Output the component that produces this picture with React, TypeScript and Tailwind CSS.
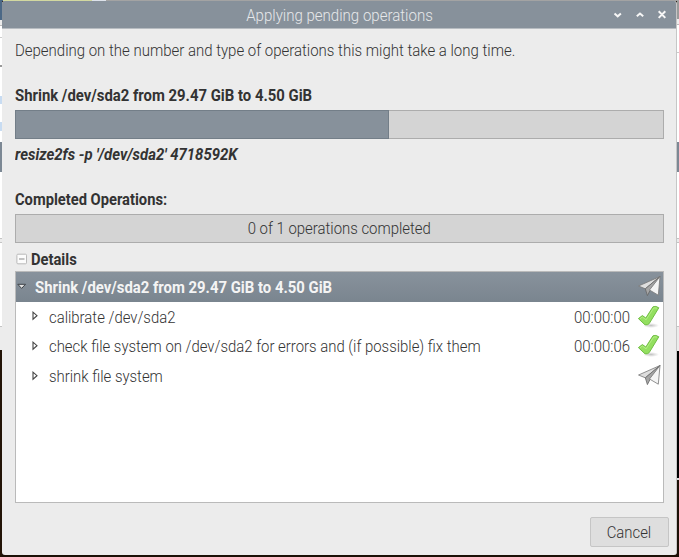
import React from "react";

function Plane() {
  return (
    <svg width="24" height="24" viewBox="0 0 24 24" className="mr-[-1px] shrink-0" strokeLinejoin="round">
      <path d="M1.5 11 23 1.5 8.3 13.8Z" fill="#dedede" stroke="#777" strokeWidth=".8" />
      <path d="M8.3 13.8 23 1.5 13 15.5 10.4 20.6Z" fill="#a5a5a5" stroke="#666" strokeWidth=".8" />
      <path d="M12.5 15 23 1.5 21.3 20.2Z" fill="#f4f4f4" stroke="#777" strokeWidth=".8" />
    </svg>
  );
}

function Tick() {
  return (
    <svg width="24" height="24" viewBox="0 0 24 24" className="mr-[-1px] shrink-0" strokeLinejoin="round">
      <defs>
        <radialGradient id="shade">
          <stop offset="0" stopColor="#999" stopOpacity=".6" />
          <stop offset="1" stopColor="#aaa" stopOpacity="0" />
        </radialGradient>
      </defs>
      <ellipse cx="14" cy="20.5" rx="8" ry="2.5" fill="url(#shade)" />
      <path d="M1.4 13.6 5.4 10.6 8.8 13 16 1.8Q18.8.6 21.8 2.8L12.2 18.6Q10.5 20.4 8 19.8Z" fill="#93df60" stroke="#6fbd42" strokeWidth="1" />
      <path d="M3 13.8 5.3 12 9.1 14.8 16.8 2.9 20 3.1" fill="none" stroke="#b5ed85" strokeWidth="1" />
    </svg>
  );
}

function Row({ label, time }: { label: string; time?: string }) {
  return (
    <div className="flex h-[29.67px] items-center pl-[16px] pr-[3px]">
      <svg width="7" height="10" viewBox="0 0 7 10" className="mt-[-1px]">
        <path d="M1 1.2v7L5 4.7Z" fill="#fff" stroke="#444" strokeWidth="1.1" />
      </svg>
      <span className="ml-[10px] mt-[2px] flex-1 whitespace-nowrap">
        <span className="inline-block origin-left scale-x-[.931]">{label}</span>
      </span>
      {time && <span className="mr-[7px] mt-[2px] origin-right scale-x-[.934]">{time}</span>}
      {time ? <Tick /> : <Plane />}
    </div>
  );
}

function LeftEdge() {
  return (
    <div className="flex w-[2px] shrink-0 flex-col bg-white">
      <div className="h-[19px] bg-[#4b6886]" />
      <div className="h-[5px] bg-[#ececec]" />
      <div className="h-px bg-[#bbb]" />
      <div className="h-[11px]" />
      <div className="h-px bg-[#ccc]" />
      <div className="h-[27px]" />
      <div className="h-[2px] bg-[#999]" />
      <div className="h-[29px]" />
      <div className="h-[8px] bg-[#c8dcf2]" />
      <div className="h-[18px]" />
      <div className="h-[9px] bg-[#c8dcf2]" />
      <div className="h-[11px]" />
      <div className="h-[30px] bg-[#7c8894]" />
      <div className="h-[66px]" />
      <div className="h-[5px] border-y border-[#c4c4c4] bg-[#ececec]" />
      <div className="h-[83px]" />
      <div className="h-[24px] border-t border-[#c4c4c4] bg-[#ececec]" />
      <div className="flex-1 bg-[#231407]" />
    </div>
  );
}

function RightEdge() {
  return (
    <div className="flex w-[2px] shrink-0 flex-col bg-white">
      <div className="h-[18px] bg-[#9b9b9b]" />
      <div className="h-[5px] bg-[#eee]" />
      <div className="h-px bg-[#bbb]" />
      <div className="h-[27px]" />
      <div className="h-px bg-[#ccc]" />
      <div className="h-[89px]" />
      <div className="h-[30px] bg-[#7c8894]" />
      <div className="h-[66px]" />
      <div className="h-[5px] border-y border-[#c4c4c4] bg-[#ececec]" />
      <div className="h-[83px]" />
      <div className="h-[25px] border-t border-[#c4c4c4] bg-[#ececec]" />
      <div className="h-[127px] bg-black" />
      <div className="h-[2px] bg-[#ddd]" />
      <div className="flex-1 bg-[#1b1006]" />
    </div>
  );
}

export default function App() {
  return (
    <div className="flex h-[557px] w-[679px] flex-col overflow-hidden bg-[#1b1006] font-['Roboto',sans-serif] text-[16px] font-light leading-[20px] text-[#333]">
      <div className="flex h-px shrink-0 bg-[#a3a3a3]">
        <div className="w-[3px] bg-[#4b6886]" />
        <div className="w-[89px] bg-[#d2d8a0]" />
        <div className="w-[14px] bg-[#dde2ea]" />
      </div>
      <div className="flex min-h-0 flex-1">
        <LeftEdge />
        <div className="mb-[2px] flex w-[675px] flex-col overflow-hidden rounded-[3px] border-r border-[#c6c6c6] bg-[#ececec]">
          <div className="flex h-[28px] shrink-0 items-center border-b border-[#b7bcc1] bg-[#87919b]">
            <div className="ml-[64px] flex-1 scale-x-[.94] pt-[2px] text-center text-[#e6e8ea]">Applying pending operations</div>
            <svg width="63" height="12" viewBox="0 0 63 12" fill="none" stroke="#f6f6f6" strokeWidth="2">
              <path d="M1.5 4.5 4.7 7.3 7.9 4.5M23.8 7.3 27 4.5 30.2 7.3M45.7 2.3 52.3 8.9M52.3 2.3 45.7 8.9" />
            </svg>
          </div>
          <div className="flex flex-col pl-[13px] pr-[12px]">
            <div className="mt-[12px] origin-left scale-x-[.936] whitespace-nowrap">Depending on the number and type of operations this might take a long time.</div>
            <div className="mt-[25px] origin-left scale-x-[.93] font-bold">Shrink /dev/sda2 from 29.47 GiB to 4.50 GiB</div>
            <div className="mt-[4px] h-[29px] border border-[#acacac] bg-[#d4d4d4]">
              <div className="-ml-px -mt-px h-[29px] w-[374px] border border-[#737e88] bg-[#87919b]" />
            </div>
            <div className="mt-[6px] origin-left scale-x-[.932] font-bold italic">resize2fs -p '/dev/sda2' 4718592K</div>
            <div className="mt-[25px] origin-left scale-x-[.919] font-bold">Completed Operations:</div>
            <div className="mt-[4px] flex h-[29px] items-center justify-center border border-[#acacac] bg-[#d4d4d4]">
              <span className="scale-x-[.932]">0 of 1 operations completed</span>
            </div>
            <div className="mt-[6px] flex h-[22px] items-center">
              <svg width="12" height="12" viewBox="0 0 12 12" className="ml-px mt-[-2px]">
                <rect x=".9" y="1.2" width="9.6" height="9.6" rx="1" fill="#fcfcfc" stroke="#b9b9b9" />
                <path d="M3 6H8.5" stroke="#888" />
              </svg>
              <span className="ml-[3px] origin-left scale-x-[.92] font-bold">Details</span>
            </div>
            <div className="h-[232px] border border-[#bababa] bg-white">
              <div className="flex h-[30px] items-center bg-linear-to-b from-[#88929c] to-[#7a858f] pl-[1px] pr-[3px] text-[#f4f4f4]">
                <svg width="10" height="8" viewBox="0 0 10 8">
                  <path d="M.8 1.3H8.5L4.6 5.4Z" fill="#e4e4e4" stroke="#3b4045" strokeWidth="1" />
                </svg>
                <span className="ml-[8px] mt-[2px] flex-1 origin-left scale-x-[.93] font-bold">Shrink /dev/sda2 from 29.47 GiB to 4.50 GiB</span>
                <Plane />
              </div>
              <Row label="calibrate /dev/sda2" time="00:00:00" />
              <Row label="check file system on /dev/sda2 for errors and (if possible) fix them" time="00:00:06" />
              <Row label="shrink file system" />
            </div>
          </div>
          <div className="ml-[588px] mt-[14px] flex h-[30px] w-[79px] items-center justify-center rounded-[2px] border border-[#c5c5c5] bg-[#dedede] pr-px pt-px">
            <span className="scale-x-[.93]">Cancel</span>
          </div>
        </div>
        <RightEdge />
      </div>
    </div>
  );
}
